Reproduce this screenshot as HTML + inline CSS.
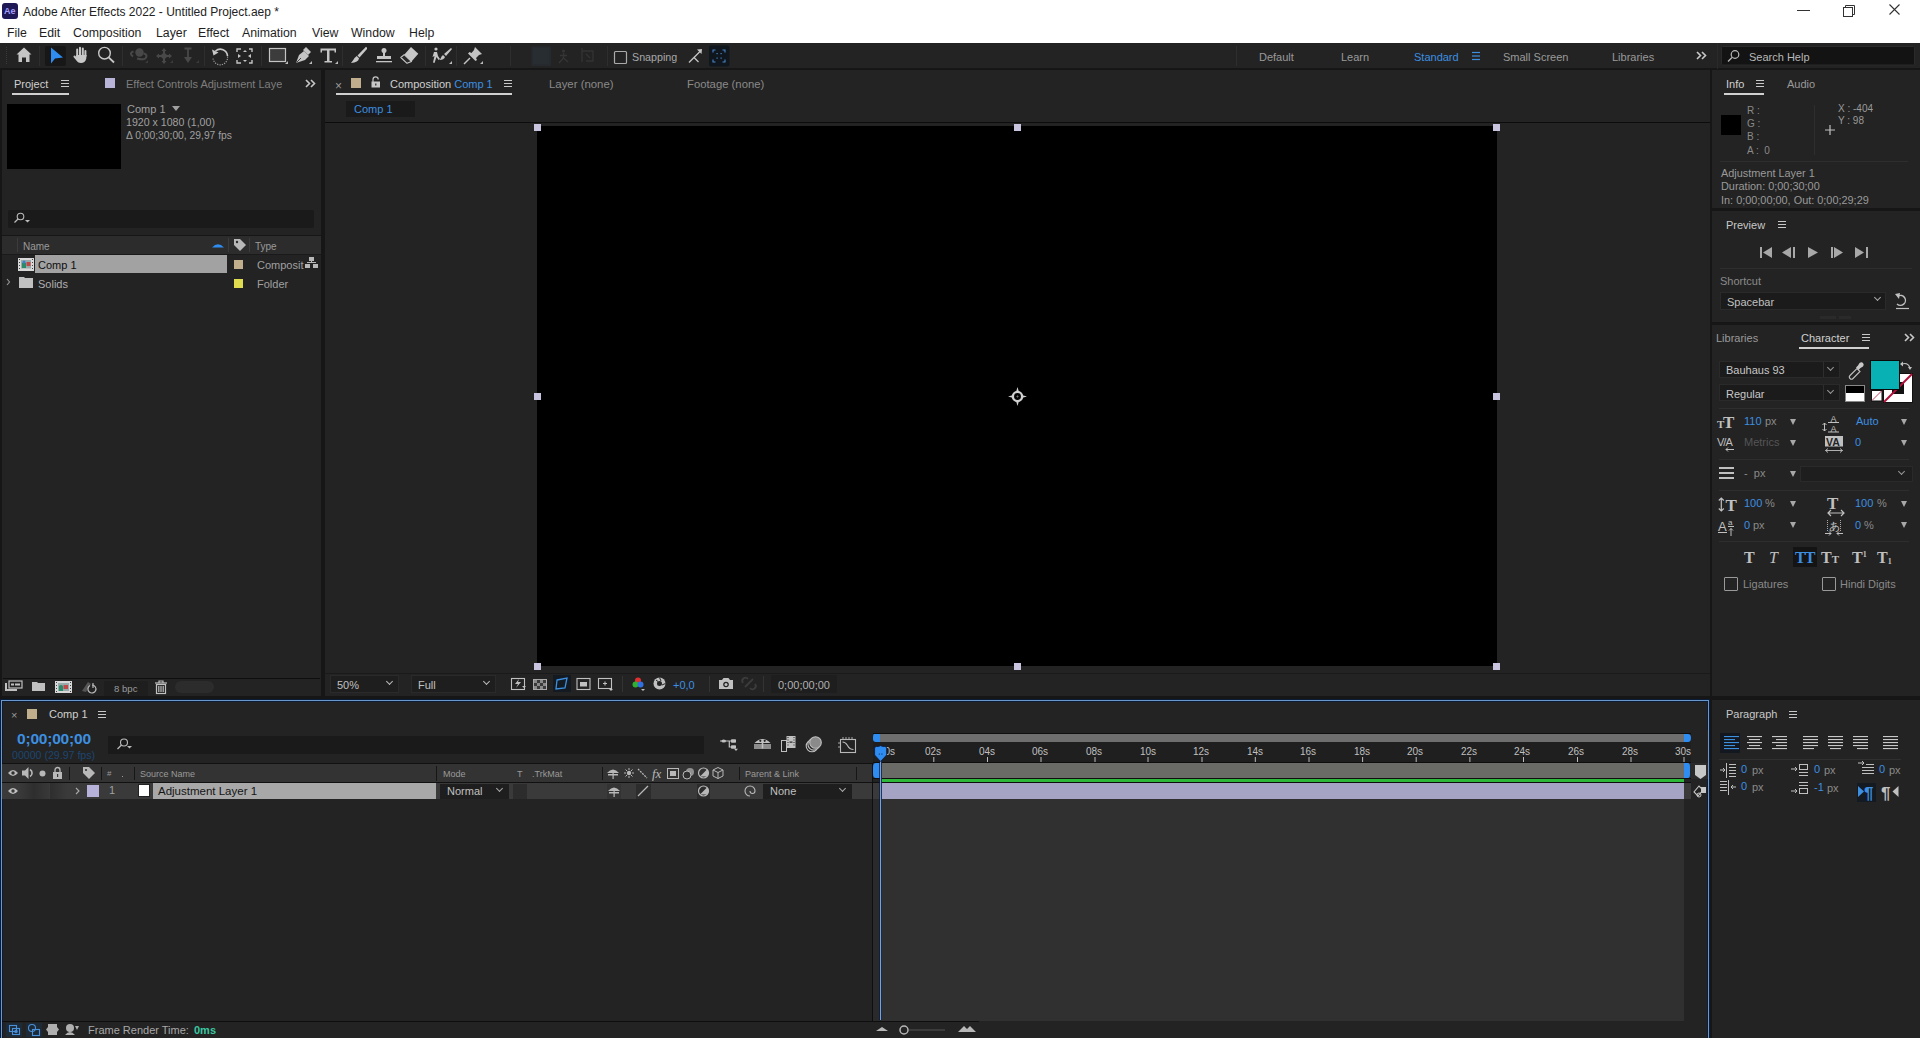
<!DOCTYPE html>
<html><head><meta charset="utf-8">
<style>
*{margin:0;padding:0;box-sizing:border-box}
html,body{width:1920px;height:1038px;overflow:hidden;background:#161616;font-family:"Liberation Sans",sans-serif;font-size:11px;color:#a8a8a8}
.a{position:absolute}
.t{position:absolute;white-space:nowrap;line-height:1;padding-top:1px}
.pn{position:absolute;background:#232323}
.bl{color:#3d8fe0}
.m{font-size:12.3px;color:#1e1e1e;top:26px}
svg{position:absolute;overflow:visible}
.sep{position:absolute;width:1px;background:#2c2c2c}
.hb{position:absolute;width:8px;height:7px;border-top:1px solid #c8c8c8;border-bottom:1px solid #c8c8c8}
.hb:after{content:"";position:absolute;left:0;top:2px;width:8px;height:1px;background:#c8c8c8}
.tab{font-size:11px;color:#9a9a9a}
.act{color:#d0d0d0}
.ul{position:absolute;height:2px;background:#d0d0d0}
.ln{position:absolute;height:1px;background:#303030}
.dd{position:absolute;background:#1b1b1b;border:1px solid #2a2a2a}
.chev{position:absolute;width:6px;height:6px;border-right:1px solid #aaa;border-bottom:1px solid #aaa;transform:rotate(45deg)}
.tri{position:absolute;width:0;height:0;border-left:3px solid transparent;border-right:3px solid transparent;border-top:5px solid #9a9a9a}
</style></head><body>
<!-- ============ TITLE + MENU ============ -->
<div class="a" style="left:0;top:0;width:1920px;height:43px;background:#fff"></div>
<div class="a" style="left:2px;top:3px;width:16px;height:16px;background:#1f1a55;border-radius:3px"></div>
<div class="t" style="left:4px;top:6px;font-size:9px;color:#a6a0ff;font-weight:bold">Ae</div>
<div class="t" style="left:23px;top:5px;font-size:12px;color:#222">Adobe After Effects 2022 - Untitled Project.aep *</div>
<div class="t m" style="left:7px">File</div>
<div class="t m" style="left:39px">Edit</div>
<div class="t m" style="left:73px">Composition</div>
<div class="t m" style="left:156px">Layer</div>
<div class="t m" style="left:198px">Effect</div>
<div class="t m" style="left:242px">Animation</div>
<div class="t m" style="left:312px">View</div>
<div class="t m" style="left:351px">Window</div>
<div class="t m" style="left:409px">Help</div>
<svg style="left:0;top:0" width="1920" height="43">
 <line x1="1797" y1="10.5" x2="1810" y2="10.5" stroke="#333" stroke-width="1"/>
 <rect x="1843.5" y="7.5" width="9" height="9" fill="none" stroke="#333"/>
 <path d="M1845.5 7.5 V5.5 H1854.5 V14.5 H1852.5" fill="none" stroke="#333"/>
 <path d="M1889.5 4.5 L1899.5 14.5 M1899.5 4.5 L1889.5 14.5" stroke="#333" stroke-width="1.1"/>
</svg>
<!-- ============ TOOLBAR ============ -->
<div class="a" style="left:0;top:43px;width:1920px;height:26px;background:#232323"></div>
<div class="a" style="left:0;top:68px;width:1920px;height:2px;background:#161616"></div>
<svg style="left:0;top:43px" width="1920" height="26">
 <!-- grip -->
 <g stroke="#3a3a3a"><line x1="6.5" y1="4" x2="6.5" y2="22" stroke-dasharray="1 1"/></g>
 <!-- home -->
 <path d="M24 4.5 L16.5 11.5 H18.5 V19 H22 V14.5 H26 V19 H29.5 V11.5 H31.5 Z" fill="#c4c4c4"/>
 <line x1="39.5" y1="3" x2="39.5" y2="23" stroke="#2e2e2e"/>
 <!-- selection -->
 <rect x="45" y="3" width="21" height="20" rx="2" fill="#171717"/>
 <path d="M51 4.5 L51 20.5 L55 15.5 L63 14.5 Z" fill="#2f8cf0"/>
 <!-- hand -->
 <g stroke="#c8c8c8" stroke-linecap="round" stroke-width="2" fill="none"><path d="M77.2 13 V6.5 M80 12 V4.8 M82.8 12 V5.5 M85.4 13 V8"/><path d="M74.5 13.5 L77 16.5"/></g>
 <path d="M76.2 12 H86.6 L86.2 16 Q85 20 81 20 Q77.5 20 76 16.5 Z" fill="#c8c8c8"/>
 <!-- zoom -->
 <circle cx="104.5" cy="10.2" r="5.8" fill="none" stroke="#c8c8c8" stroke-width="1.4"/>
 <line x1="108.7" y1="14.4" x2="114" y2="19.5" stroke="#c8c8c8" stroke-width="1.8"/>
 <line x1="122.5" y1="3" x2="122.5" y2="23" stroke="#2e2e2e"/>
 <!-- orbit dim -->
 <g fill="#484848" stroke="#484848">
  <circle cx="139.5" cy="9.5" r="4.2" stroke="none"/>
  <path d="M133 13.5 Q128.5 10 133.5 8.5 M137 15.5 Q146 18 146.5 13 Q146.5 11 143.5 10.5" fill="none" stroke-width="2"/>
  <path d="M145 20 L148 17 V20 Z" stroke="none" fill="#3a3a3a"/>
  <!-- pan -->
  <path d="M164 7 V19 M158 13 H170" stroke-width="2" fill="none"/>
  <circle cx="164" cy="13" r="2.8" stroke="none"/>
  <path d="M161.5 8 L164 5 L166.5 8 Z M161.5 18 L164 21 L166.5 18 Z M159 10.5 L156 13 L159 15.5 Z M169 10.5 L172 13 L169 15.5 Z" stroke="none"/>
  <path d="M170 20 L173 17 V20 Z" stroke="none" fill="#3a3a3a"/>
  <!-- dolly -->
  <path d="M184.5 5.5 H191.5 M188 5.5 V15" stroke-width="1.8" fill="none"/>
  <path d="M184 14 H192 L188 20 Z" stroke="none"/>
  <path d="M196 20 L199 17 V20 Z" stroke="none" fill="#3a3a3a"/>
 </g>
 <line x1="204.5" y1="3" x2="204.5" y2="23" stroke="#2e2e2e"/>
 <!-- rotate -->
 <path d="M215.5 8 A7.2 7.2 0 0 1 227.5 13" fill="none" stroke="#c8c8c8" stroke-width="1.6"/>
 <path d="M227.5 13.5 A7.2 7.2 0 0 1 213 15.5" fill="none" stroke="#9a9a9a" stroke-width="1.2" stroke-dasharray="1.2 1.2"/>
 <path d="M212 6.5 L213.5 12.5 L218.5 9.5 Z" fill="#c8c8c8"/>
 <!-- pan behind -->
 <g fill="none" stroke="#c4c4c4" stroke-width="1.4">
  <path d="M237 9 V6 H241 M249 6 H252 V9 M252 17 V20 H249 M241 20 H237 V17"/>
 </g>
 <path d="M238 11 L241 13 L238 15 Z M251 11 L248 13 L251 15 Z M243 9 L245 7 L247 9 Z M243 17 L245 19 L247 17Z" fill="#c4c4c4"/>
 <line x1="261.5" y1="3" x2="261.5" y2="23" stroke="#2e2e2e"/>
 <!-- rectangle -->
 <rect x="269.5" y="5.5" width="16" height="13" fill="#3c3c3c" stroke="#c4c4c4" stroke-width="1.2"/>
 <path d="M285 21 L288 18 V21 Z" fill="#bbb"/>
 <!-- pen -->
 <path d="M296 20 L299 12 L304 8 L309 13 L305 17 Z" fill="#c4c4c4"/>
 <path d="M303 7 L306 4 L311 9 L308 12 Z" fill="#c4c4c4"/>
 <line x1="296.5" y1="19.5" x2="301" y2="15" stroke="#232323" stroke-width="0.8"/>
 <path d="M309 21 L312 18 V21 Z" fill="#bbb"/>
 <!-- T -->
 <path d="M320.5 5.5 H336 V9.5 H334.5 V7.5 H329.5 V18 H332 V19.5 H324.5 V18 H327 V7.5 H322 V9.5 H320.5 Z" fill="#c4c4c4"/>
 <path d="M335 21 L338 18 V21 Z" fill="#bbb"/>
 <line x1="342.5" y1="3" x2="342.5" y2="23" stroke="#2e2e2e"/>
 <!-- brush -->
 <path d="M366 3.8 Q367.5 4.5 367 6 L359.5 14.5 L357.5 12.5 Z" fill="#c8c8c8"/>
 <path d="M356.8 13 L359 15.2 Q358.5 19.5 351 20 Q353.5 17 354.5 15 Z" fill="#c8c8c8"/>
 <!-- stamp -->
 <circle cx="384" cy="7.5" r="2.5" fill="#c4c4c4"/>
 <path d="M383 9 H385 V13 H391 V16 H377 V13 H383 Z" fill="#c4c4c4"/>
 <rect x="376" y="18" width="16" height="1.3" fill="#c4c4c4"/>
 <!-- eraser -->
 <path d="M411 4 L418.3 10.8 L411.5 18.5 L404.2 11.7 Z" fill="#c8c8c8"/>
 <path d="M404.2 11.7 L411.5 18.5 L407 20.3 L400.8 14.5 Z" fill="#2a2a2a" stroke="#c8c8c8" stroke-width="1.1" stroke-linejoin="round"/>
 <line x1="425.5" y1="3" x2="425.5" y2="23" stroke="#2e2e2e"/>
 <!-- roto brush -->
 <circle cx="436" cy="6" r="1.6" fill="#c4c4c4"/>
 <path d="M434 9 L437 9 L438 13 L440 16 L438.5 17 L436.5 14 L434.5 20 L433 19.5 L434.5 13 L432.5 14 Z" fill="#c4c4c4"/>
 <path d="M451 5 L452 6 L446 13 L444 11 Z M443 12 L445 14 Q444 17 439.5 17 Q441 15 441.5 13.5 Z" fill="#c4c4c4"/>
 <path d="M449 21 L452 18 V21 Z" fill="#bbb"/>
 <line x1="456.5" y1="3" x2="456.5" y2="23" stroke="#2e2e2e"/>
 <!-- puppet pin -->
 <path d="M475 4 L482 11 L479 12 L476 15 L477 17 L475.5 18 L468 10.5 L469.5 9 L471.5 10 L474 7 Z" fill="#c4c4c4"/>
 <line x1="470" y1="15" x2="464" y2="21" stroke="#c4c4c4" stroke-width="1.5"/>
 <path d="M480 21 L483 18 V21 Z" fill="#bbb"/>
 <line x1="510.5" y1="3" x2="510.5" y2="23" stroke="#2e2e2e"/>
 <!-- dim align icons -->
 <rect x="531.5" y="3.5" width="19.5" height="19.5" rx="1" fill="#262a2e"/>
 <rect x="533" y="5" width="16" height="16" fill="#282d32"/>
 <circle cx="563.5" cy="8" r="1.6" fill="#353535"/>
 <path d="M563.5 10 V15 L559 20 M563.5 15 L568 19 M560 12.5 H567" stroke="#353535" stroke-width="1.4" fill="none"/>
 <path d="M582 5 V19 M582 8 H593 V18 H586 M586 11 L590 15" stroke="#333" stroke-width="1.3" fill="none"/>
 <line x1="607.5" y1="3" x2="607.5" y2="23" stroke="#2e2e2e"/>
 <!-- snapping checkbox -->
 <rect x="614.5" y="8.5" width="12" height="12" rx="1" fill="none" stroke="#aaa" stroke-width="1.2"/>
 <!-- snap icon -->
 <path d="M689 19.5 L694 14.5 L698.5 19 M693 15.5 L700.5 8" stroke="#c4c4c4" stroke-width="1.3" fill="none"/>
 <path d="M697 6.5 L702 6 L701.5 11 Z" fill="#c4c4c4"/>
 <rect x="709" y="2.5" width="20.5" height="21" rx="2" fill="#10161d"/>
 <g stroke="#4a86c8" stroke-width="1.1" fill="none">
  <path d="M713 9.5 V7 H715.5 M722.5 7 H725 V9.5 M725 16.5 V19 H722.5 M715.5 19 H713 V16.5"/>
 </g>
 <g fill="#4a86c8"><rect x="716.5" y="10" width="1.2" height="1.2"/><rect x="720.5" y="10" width="1.2" height="1.2"/><rect x="716.5" y="14.5" width="1.2" height="1.2"/><rect x="720.5" y="14.5" width="1.2" height="1.2"/></g>
 <line x1="1236.5" y1="3" x2="1236.5" y2="23" stroke="#2e2e2e"/>
 <!-- hamburger Standard -->
 <g stroke="#3d8fe0" stroke-width="1.2"><line x1="1472" y1="9.5" x2="1480" y2="9.5"/><line x1="1472" y1="13" x2="1480" y2="13"/><line x1="1472" y1="16.5" x2="1480" y2="16.5"/></g>
 <!-- >> -->
 <path d="M1697 9 L1700.5 12.5 L1697 16 M1702 9 L1705.5 12.5 L1702 16" stroke="#c8c8c8" stroke-width="1.6" fill="none"/>
 <line x1="1717.5" y1="0" x2="1717.5" y2="26" stroke="#2a2a2a"/>
 <rect x="1721.5" y="3.5" width="193" height="18.5" rx="1" fill="#131313" stroke="#2a2a2a"/>
 <circle cx="1735" cy="11.5" r="3.8" fill="none" stroke="#bbb" stroke-width="1.2"/>
 <line x1="1732" y1="14.5" x2="1728" y2="18.5" stroke="#bbb" stroke-width="1.3"/>
</svg>
<div class="t" style="left:632px;top:51px;font-size:10.7px;color:#a8a8a8">Snapping</div>
<div class="t" style="left:1259px;top:51px;font-size:11px;color:#9a9a9a">Default</div>
<div class="t" style="left:1341px;top:51px;font-size:11px;color:#9a9a9a">Learn</div>
<div class="t" style="left:1414px;top:51px;font-size:11px;color:#3d8fe0">Standard</div>
<div class="t" style="left:1503px;top:51px;font-size:11px;color:#9a9a9a">Small Screen</div>
<div class="t" style="left:1612px;top:51px;font-size:11px;color:#9a9a9a">Libraries</div>
<div class="t" style="left:1749px;top:51px;font-size:11px;color:#b8b8b8">Search Help</div>
<!-- ============ PROJECT PANEL ============ -->
<div class="pn" style="left:2px;top:70px;width:319px;height:626px"></div>
<div class="t tab act" style="left:14px;top:78px">Project</div>
<div class="hb" style="left:61px;top:80px"></div>
<div class="ul" style="left:12px;top:93px;width:57px"></div>
<div class="a" style="left:105px;top:78px;width:10px;height:10px;background:#b8b4d8"></div>
<div class="t tab" style="left:126px;top:78px;color:#7e7e7e;width:156px;overflow:hidden">Effect Controls Adjustment Layer 1</div>
<svg style="left:0;top:70px" width="322" height="30">
 <path d="M306 10 L309.5 13.5 L306 17 M311 10 L314.5 13.5 L311 17" stroke="#c8c8c8" stroke-width="1.6" fill="none"/>
</svg>
<div class="a" style="left:7px;top:104px;width:114px;height:65px;background:#000"></div>
<div class="t" style="left:127px;top:103px;font-size:11px;color:#a0a0a0">Comp 1</div>
<div class="tri" style="left:172px;top:106px;border-left-width:4px;border-right-width:4px;border-top-width:5px;border-top-color:#a0a0a0"></div>
<div class="t" style="left:126px;top:116px;font-size:10.6px;color:#a0a0a0">1920 x 1080 (1,00)</div>
<div class="t" style="left:126px;top:130px;font-size:10.3px;color:#a0a0a0">Δ 0;00;30;00, 29,97 fps</div>
<div class="a" style="left:8px;top:210px;width:306px;height:18px;background:#1a1a1a;border-radius:2px"></div>
<svg style="left:0;top:200px" width="322" height="100">
 <circle cx="20.5" cy="16.5" r="3.3" fill="none" stroke="#bbb" stroke-width="1.1"/>
 <line x1="18" y1="19" x2="14.5" y2="22.5" stroke="#bbb" stroke-width="1.2"/>
 <path d="M25 20 H30 L27.5 22.5 Z" fill="#bbb"/>
</svg>
<div class="a" style="left:2px;top:235px;width:319px;height:1px;background:#161616"></div>
<div class="a" style="left:2px;top:236px;width:319px;height:18px;background:#2c2c2c"></div>
<div class="a" style="left:2px;top:254px;width:319px;height:1px;background:#1a1a1a"></div>
<div class="a" style="left:17px;top:238px;width:1px;height:14px;background:#3c3c3c"></div>
<div class="a" style="left:228px;top:238px;width:1px;height:14px;background:#3c3c3c"></div>
<div class="a" style="left:249px;top:238px;width:1px;height:14px;background:#3c3c3c"></div>
<div class="t" style="left:23px;top:241px;font-size:10px;color:#9a9a9a">Name</div>
<div class="t" style="left:255px;top:241px;font-size:10px;color:#9a9a9a">Type</div>
<svg style="left:0;top:236px" width="322" height="60">
 <path d="M212 11.5 Q218 5 224 11.5 Z" fill="#2f8cf0"/>
 <path d="M234 3 H240 L246 9 L240 15 L234 9 Z" fill="#b8b8b8"/>
 <circle cx="237" cy="6" r="1.2" fill="#2c2c2c"/>
 <!-- comp icon -->
 <rect x="18" y="22" width="16" height="13" fill="#d8d8d8"/>
 <g fill="#444"><rect x="19" y="23" width="1" height="1"/><rect x="19" y="26" width="1" height="1"/><rect x="19" y="29" width="1" height="1"/><rect x="19" y="32" width="1" height="1"/><rect x="32" y="23" width="1" height="1"/><rect x="32" y="26" width="1" height="1"/><rect x="32" y="29" width="1" height="1"/><rect x="32" y="32" width="1" height="1"/></g>
 <rect x="21" y="24" width="10" height="8.5" fill="#9aa"/>
 <path d="M22 32 V27 Q24 25 26 27 V32 Z" fill="#2a8a6a"/>
 <rect x="26.5" y="26" width="4" height="4" fill="#c04848"/>
 <circle cx="24" cy="26" r="1.5" fill="#3d7fd0"/>
 <!-- network icon -->
 <g fill="#b8b8b8"><rect x="309" y="21" width="5" height="4"/><rect x="305" y="28" width="5" height="4"/><rect x="313" y="28" width="5" height="4"/><rect x="311" y="25" width="1" height="2"/><rect x="307" y="26" width="9" height="1"/></g>
 <!-- solids arrow -->
 <path d="M7 43 L9.5 46 L7 49" stroke="#9a9a9a" stroke-width="1.1" fill="none"/>
 <path d="M19 41 H24 L25 42 H33 V52 H19 Z" fill="#c0c0c0"/>
</svg>
<div class="a" style="left:35px;top:255px;width:192px;height:18px;background:#a2a2a2"></div>
<div class="t" style="left:38px;top:259px;font-size:11px;color:#0e0e0e">Comp 1</div>
<div class="a" style="left:234px;top:260px;width:9px;height:9px;background:#c0ae8c"></div>
<div class="t" style="left:257px;top:259px;font-size:11px;color:#a0a0a0">Composit</div>
<div class="t" style="left:38px;top:278px;font-size:11px;color:#b0b0b0">Solids</div>
<div class="a" style="left:234px;top:279px;width:9px;height:9px;background:#e0dc50"></div>
<div class="t" style="left:257px;top:278px;font-size:11px;color:#a0a0a0">Folder</div>
<!-- project bottom bar -->
<div class="a" style="left:3px;top:678px;width:317px;height:1px;background:#0e0e0e"></div>
<svg style="left:0;top:678px" width="322" height="18">
 <g fill="#c0c0c0">
  <rect x="5" y="5" width="2" height="8"/><rect x="5" y="11" width="12" height="2"/>
  <rect x="9" y="3" width="13" height="7" fill="none" stroke="#c0c0c0" stroke-width="1.2"/>
  <rect x="11" y="5.5" width="3" height="2"/><rect x="15" y="5.5" width="5" height="2"/>
  <path d="M32 4 H37 L38 5 H45 V13 H32 Z"/>
 </g>
 <rect x="55" y="3" width="17" height="12" fill="#d8d8d8"/>
 <g fill="#444"><rect x="56" y="4" width="1" height="1"/><rect x="56" y="7" width="1" height="1"/><rect x="56" y="10" width="1" height="1"/><rect x="56" y="13" width="1" height="1"/><rect x="70" y="4" width="1" height="1"/><rect x="70" y="7" width="1" height="1"/><rect x="70" y="10" width="1" height="1"/><rect x="70" y="13" width="1" height="1"/></g>
 <rect x="58" y="5" width="11" height="8" fill="#9aa"/>
 <path d="M59 13 V8 Q61 6 63 8 V13 Z" fill="#2a8a6a"/><rect x="63.5" y="7" width="4.5" height="4" fill="#c04848"/>
 <path d="M82 13 L88 4 L91 6 L86 14 Z" fill="#555"/>
 <path d="M92 7 A4 4 0 1 1 90 7.5" fill="none" stroke="#bbb" stroke-width="1.2"/>
 <line x1="93" y1="5" x2="93" y2="10" stroke="#bbb" stroke-width="1.2"/>
 <rect x="104" y="3" width="44" height="15" fill="#1e1e1e"/>
 <g fill="none" stroke="#c0c0c0" stroke-width="1.2">
  <rect x="156.5" y="6.5" width="9" height="9"/><line x1="155" y1="5" x2="167" y2="5"/>
  <path d="M159 5 V3 H163 V5"/><line x1="158.8" y1="8" x2="158.8" y2="14"/><line x1="161" y1="8" x2="161" y2="14"/><line x1="163.2" y1="8" x2="163.2" y2="14"/>
 </g>
 <rect x="175" y="3" width="39" height="12" rx="6" fill="#2c2c2c"/>
</svg>
<div class="t" style="left:114px;top:682.5px;font-size:9.6px;color:#9a9a9a">8 bpc</div>
<!-- ============ COMP PANEL ============ -->
<div class="pn" style="left:325px;top:70px;width:1385px;height:626px"></div>
<div class="t" style="left:335px;top:79px;font-size:12px;color:#9a9a9a">×</div>
<div class="a" style="left:351px;top:78px;width:10px;height:10px;background:#c0ae8c"></div>
<svg style="left:325px;top:70px" width="1383" height="60">
 <path d="M48 12 V9.5 A2.6 2.6 0 0 1 53.2 9.5" fill="none" stroke="#c8c8c8" stroke-width="1.2"/>
 <rect x="46.5" y="11.5" width="8.5" height="6" fill="#c8c8c8"/><rect x="50.2" y="13.5" width="1.2" height="2" fill="#232323"/>
</svg>
<div class="t tab act" style="left:390px;top:78px">Composition <span class="bl">Comp 1</span></div>
<div class="hb" style="left:504px;top:80px"></div>
<div class="ul" style="left:336px;top:93px;width:176px"></div>
<div class="t tab" style="left:549px;top:78px;color:#8a8a8a;font-size:11.4px">Layer (none)</div>
<div class="t tab" style="left:687px;top:78px;color:#8a8a8a;font-size:11.3px">Footage (none)</div>
<div class="a" style="left:346px;top:101px;width:69px;height:16px;background:#1a1a1a"></div>
<div class="t" style="left:354px;top:103px;font-size:11px;color:#3d8fe0">Comp 1</div>
<div class="a" style="left:325px;top:122px;width:1385px;height:1px;background:#0c0c0c"></div>
<div class="a" style="left:537px;top:126px;width:960px;height:540px;background:#000"></div>
<svg style="left:0;top:0" width="1920" height="700">
 <g fill="#c8c4e0">
  <rect x="534" y="124" width="7" height="7"/><rect x="1014" y="124" width="7" height="7"/><rect x="1493" y="124" width="7" height="7"/>
  <rect x="534" y="393" width="7" height="7"/><rect x="1493" y="393" width="7" height="7"/>
  <rect x="534" y="663" width="7" height="7"/><rect x="1014" y="663" width="7" height="7"/><rect x="1493" y="663" width="7" height="7"/>
 </g>
 <g transform="translate(1017.5 396.5)" fill="#d0d0d0">
  <circle r="4.6" fill="none" stroke="#d0d0d0" stroke-width="2.3"/>
  <path d="M-1.6 -4 L0 -9.5 L1.6 -4 Z M-1.6 4 L0 9.5 L1.6 4 Z M-4 -1.6 L-9.5 0 L-4 1.6 Z M4 -1.6 L9.5 0 L4 1.6 Z"/>
  <path d="M0 -1.2 V1.2 M-1.2 0 H1.2" stroke="#888" stroke-width="0.6"/>
 </g>
</svg>
<!-- comp bottom bar -->
<div class="a" style="left:325px;top:673px;width:1385px;height:1px;background:#1a1a1a"></div>

<div class="dd" style="left:330px;top:675px;width:69px;height:18px;background:#1e1e1e"></div>
<div class="t" style="left:337px;top:679px;font-size:11px;color:#c0c0c0">50%</div>
<div class="chev" style="left:387px;top:679px;width:5px;height:5px;border-color:#bbb"></div>
<div class="dd" style="left:411px;top:675px;width:85px;height:18px;background:#1e1e1e"></div>
<div class="t" style="left:418px;top:679px;font-size:11px;color:#c0c0c0">Full</div>
<div class="chev" style="left:484px;top:679px;width:5px;height:5px;border-color:#bbb"></div>
<svg style="left:0;top:672px" width="1000" height="26">
 <g fill="none" stroke="#c0c0c0" stroke-width="1.1">
  <rect x="511.5" y="6.5" width="13" height="11"/>
  <rect x="577" y="6.5" width="13" height="11"/>
  <rect x="598.5" y="6.5" width="13" height="10"/><path d="M605 9.5 V13.5 M603 11.5 H607"/>
 </g>
 <path d="M519 7 L515 12 H518 L516 16 L521 10 H518 Z" fill="#c0c0c0"/>
 <path d="M522 14 H526 L524 16 Z M609 17 H613 L611 19 Z" fill="#c0c0c0"/>
 <rect x="533.5" y="7.5" width="13" height="10" fill="#3a3a3a" stroke="#aaa"/>
 <g fill="#8a8a8a"><rect x="534" y="8" width="3" height="3"/><rect x="540" y="8" width="3" height="3"/><rect x="537" y="11" width="3" height="3"/><rect x="543" y="11" width="3" height="3"/><rect x="534" y="14" width="3" height="3"/><rect x="540" y="14" width="3" height="3"/></g>
 <rect x="553" y="3" width="18" height="17" fill="#131a22"/>
 <path d="M557 8 L567 6 L565 16 L556 17 Z" fill="none" stroke="#3d8fe0" stroke-width="1.3"/>
 <rect x="580" y="10" width="7" height="4.5" fill="#c0c0c0"/>
 <line x1="622.5" y1="4" x2="622.5" y2="20" stroke="#333"/>
 <circle cx="638" cy="8.5" r="3" fill="#e03030"/><circle cx="635.5" cy="12.5" r="3" fill="#30b030"/><circle cx="640.5" cy="12.5" r="3" fill="#3070e0"/>
 <path d="M641 17 H645 L643 19 Z" fill="#c0c0c0"/>
 <circle cx="659.5" cy="11.5" r="6" fill="#c0c0c0"/>
 <circle cx="659.5" cy="11.5" r="2.5" fill="#232323"/>
 <path d="M659.5 5.5 L661 9 M665.5 11.5 L662 13 M656 8 L658 9.5" stroke="#232323" stroke-width="1"/>
 <line x1="709.5" y1="4" x2="709.5" y2="20" stroke="#333"/>
 <path d="M719 8 H722 L723.5 6 H728.5 L730 8 H733 V17 H719 Z" fill="#c0c0c0"/>
 <circle cx="726" cy="12.5" r="2.8" fill="#232323"/><circle cx="726" cy="12.5" r="1.5" fill="#c0c0c0"/>
 <path d="M745 15 L753 7 M743 11 A3 3 0 0 1 748 7 M750 16 A3 3 0 0 0 755 12" stroke="#3c3c3c" stroke-width="1.8" fill="none"/>
 <line x1="763.5" y1="4" x2="763.5" y2="20" stroke="#333"/>
 <rect x="771" y="3" width="66" height="18" fill="#1e1e1e"/>
</svg>
<div class="t" style="left:673px;top:679px;font-size:11px;color:#3d8fe0">+0,0</div>
<div class="t" style="left:778px;top:679px;font-size:11px;color:#b0b0b0">0;00;00;00</div>
<!-- ============ RIGHT PANELS ============ -->
<div class="pn" style="left:1712px;top:70px;width:208px;height:138px"></div>
<div class="t tab act" style="left:1726px;top:78px">Info</div>
<div class="hb" style="left:1756px;top:80px"></div>
<div class="ul" style="left:1724px;top:93px;width:40px"></div>
<div class="t tab" style="left:1787px;top:78px">Audio</div>
<div class="a" style="left:1721px;top:115px;width:20px;height:20px;background:#000"></div>
<div class="t" style="left:1747px;top:102.5px;font-size:10px;color:#8a8a8a;line-height:13.4px;white-space:pre">R :
G :
B :
A :  0</div>
<div class="a" style="left:1814px;top:105px;width:1px;height:50px;background:#2e2e2e"></div>
<svg style="left:1700px;top:100px" width="220" height="60">
 <path d="M130 25 V35 M125 30 H135" stroke="#c0c0c0" stroke-width="1.2"/>
</svg>
<div class="t" style="left:1838px;top:101.5px;font-size:10px;color:#9a9a9a;line-height:12.8px;white-space:pre">X : -404
Y : 98</div>
<div class="a" style="left:1720px;top:161px;width:188px;height:1px;background:#2e2e2e"></div>
<div class="t" style="left:1721px;top:165.5px;font-size:10.9px;color:#9a9a9a;line-height:13.8px;white-space:pre">Adjustment Layer 1
Duration: 0;00;30;00
In: 0;00;00;00, Out: 0;00;29;29</div>
<!-- preview -->
<div class="pn" style="left:1712px;top:211px;width:208px;height:111px"></div>
<div class="t tab act" style="left:1726px;top:219px;color:#c8c8c8">Preview</div>
<div class="hb" style="left:1778px;top:221px"></div>
<svg style="left:1712px;top:240px" width="208" height="30">
 <g fill="#a8a8a8">
  <rect x="48" y="7" width="2" height="11"/><path d="M60 7 V18 L51 12.5 Z"/>
  <path d="M79 7 V18 L70 12.5 Z"/><rect x="81" y="7" width="2" height="11"/>
  <path d="M96 7 V18 L106 12.5 Z"/>
  <rect x="119" y="7" width="2" height="11"/><path d="M122 7 V18 L131 12.5 Z"/>
  <path d="M143 7 V18 L152 12.5 Z"/><rect x="154" y="7" width="2" height="11"/>
 </g>
</svg>
<div class="a" style="left:1720px;top:268px;width:192px;height:1px;background:#2e2e2e"></div>
<div class="t" style="left:1720px;top:275px;font-size:11px;color:#8a8a8a">Shortcut</div>
<div class="dd" style="left:1720px;top:292px;width:166px;height:18px"></div>
<div class="t" style="left:1727px;top:296px;font-size:11px;color:#c0c0c0">Spacebar</div>
<div class="chev" style="left:1875px;top:295px;width:5px;height:5px;border-color:#aaa"></div>
<svg style="left:1890px;top:290px" width="30" height="25">
 <path d="M8 6 A5 5 0 1 1 7 14" fill="none" stroke="#c0c0c0" stroke-width="1.4"/>
 <path d="M5 4 L9 9 L10 3 Z" fill="#c0c0c0"/>
 <line x1="6" y1="18.5" x2="19" y2="18.5" stroke="#c0c0c0" stroke-width="1.2"/>
</svg>
<svg style="left:1712px;top:314px" width="208" height="8">
 <rect x="108" y="2" width="16" height="3" fill="#2a2a2a"/><rect x="127" y="2" width="12" height="3" fill="#2a2a2a"/>
</svg>
<!-- character -->
<div class="pn" style="left:1712px;top:325px;width:208px;height:371px"></div>
<div class="t tab" style="left:1716px;top:332px;color:#9a9a9a">Libraries</div>
<div class="t tab act" style="left:1801px;top:332px">Character</div>
<div class="hb" style="left:1862px;top:334px"></div>
<div class="ul" style="left:1799px;top:347px;width:70px"></div>
<svg style="left:1712px;top:325px" width="208" height="30">
 <path d="M193 9 L196.5 12.5 L193 16 M198 9 L201.5 12.5 L198 16" stroke="#c8c8c8" stroke-width="1.6" fill="none"/>
</svg>
<div class="dd" style="left:1719px;top:361px;width:121px;height:17px"></div>
<div class="a" style="left:1823px;top:362px;width:1px;height:15px;background:#2e2e2e"></div>
<div class="t" style="left:1726px;top:364px;font-size:11px;color:#c8c8c8">Bauhaus 93</div>
<div class="chev" style="left:1828px;top:365px;width:5px;height:5px;border-color:#999"></div>
<div class="dd" style="left:1719px;top:384px;width:121px;height:17px"></div>
<div class="a" style="left:1823px;top:385px;width:1px;height:15px;background:#2e2e2e"></div>
<div class="t" style="left:1726px;top:388px;font-size:11px;color:#c8c8c8">Regular</div>
<div class="chev" style="left:1828px;top:388px;width:5px;height:5px;border-color:#999"></div>
<svg style="left:1712px;top:355px" width="208" height="60">
 <!-- eyedropper -->
 <path d="M138 23.5 Q136.5 22 138 20.5 L145 13.5 L148 16.5 L141 23.5 Q139.5 25 138 23.5 Z" fill="none" stroke="#c0c0c0" stroke-width="1.1"/>
 <path d="M144 12.5 L146 10.5 L147.5 8 Q149.5 6.5 151 8 Q152.5 9.5 151 11.5 L148.5 13 L146.5 15 Z" fill="#c8c8c8"/>
 <!-- b/w swatch -->
 <rect x="133.5" y="30.5" width="19" height="16" fill="#fff" stroke="#888"/>
 <rect x="134" y="31" width="18" height="7" fill="#000"/>
 <!-- stroke swatch -->
 <rect x="171.5" y="18.5" width="29" height="29" fill="#fff" stroke="#111"/>
 <rect x="180" y="27" width="12" height="12" fill="#111"/>
 <line x1="172" y1="47" x2="200" y2="19" stroke="#b0103a" stroke-width="2"/>
 <!-- fill swatch -->
 <rect x="158.5" y="5.5" width="29" height="29" fill="#08b2b4" stroke="#0a0a0a"/>
 <!-- no color -->
 <rect x="159.5" y="35.5" width="10.5" height="10.5" fill="#fff" stroke="#111"/>
 <line x1="160" y1="45.5" x2="169.5" y2="36" stroke="#b0103a" stroke-width="0.8"/>
 <!-- swap -->
 <path d="M190 9 Q196 7 198 13" fill="none" stroke="#c0c0c0" stroke-width="1.2"/>
 <path d="M188 9 L191 6.5 L191 11.5 Z M196 12 L200 12 L198 15 Z" fill="#c0c0c0"/>
</svg>
<div class="a" style="left:1719px;top:408px;width:190px;height:1px;background:#2e2e2e"></div>
<div class="a" style="left:1719px;top:459px;width:190px;height:1px;background:#2e2e2e"></div>
<div class="a" style="left:1719px;top:490px;width:190px;height:1px;background:#2e2e2e"></div>
<div class="a" style="left:1719px;top:541px;width:190px;height:1px;background:#2e2e2e"></div>
<!-- value texts -->
<div class="t bl" style="left:1744px;top:415px;font-size:11px">110</div><div class="t" style="left:1765px;top:415px;font-size:11px;color:#8a8a8a">px</div>
<div class="t" style="left:1744px;top:436px;font-size:11px;color:#555">Metrics</div>
<div class="t bl" style="left:1856px;top:415px;font-size:11px">Auto</div>
<div class="t bl" style="left:1855px;top:436px;font-size:11px">0</div>
<div class="t" style="left:1744px;top:467px;font-size:11px;color:#8a8a8a">-&nbsp; px</div>
<div class="dd" style="left:1800px;top:466px;width:113px;height:16px;background:#1e1e1e"></div>
<div class="chev" style="left:1899px;top:469px;width:5px;height:5px;border-color:#999"></div>
<div class="t bl" style="left:1744px;top:497px;font-size:11px">100</div><div class="t" style="left:1765px;top:497px;font-size:11px;color:#8a8a8a">%</div>
<div class="t bl" style="left:1855px;top:497px;font-size:11px">100</div><div class="t" style="left:1877px;top:497px;font-size:11px;color:#8a8a8a">%</div>
<div class="t bl" style="left:1744px;top:519px;font-size:11px">0</div><div class="t" style="left:1753px;top:519px;font-size:11px;color:#8a8a8a">px</div>
<div class="t bl" style="left:1855px;top:519px;font-size:11px">0</div><div class="t" style="left:1864px;top:519px;font-size:11px;color:#8a8a8a">%</div>
<svg style="left:1712px;top:400px" width="208" height="200">
 <g fill="#a8a8a8">
  <path d="M78 19 L81 25 L84 19 Z M78 40 L81 46 L84 40 Z M78 71 L81 77 L84 71 Z M78 101 L81 107 L84 101 Z M78 122 L81 128 L84 122 Z"/>
  <path d="M189 19 L192 25 L195 19 Z M189 40 L192 46 L195 40 Z M189 101 L192 107 L195 101 Z M189 122 L192 128 L195 122 Z"/>
 </g>
 <g fill="#c0c0c0" font-family="Liberation Serif" font-weight="bold">
  <text x="5" y="28" font-size="11">T</text><text x="11" y="28" font-size="17">T</text>
  <text x="5" y="46" font-size="11" font-family="Liberation Sans" font-weight="normal" letter-spacing="-1">V/A</text>
  <text x="13.5" y="111" font-size="17">T</text>
  <text x="115" y="109" font-size="17">T</text>
  <text x="6" y="131" font-size="13" font-family="Liberation Sans" font-weight="normal">A</text><text x="16" y="125" font-size="8" font-family="Liberation Sans" font-weight="normal">a</text>
 </g>
 <path d="M9.3 111 V98 M6.8 100.5 L9.3 98 L11.8 100.5 M6.8 108.5 L9.3 111 L11.8 108.5" stroke="#c0c0c0" stroke-width="1.2" fill="none"/>
 <path d="M116 113 H132 M119 110 L116 113 L119 116 M129 110 L132 113 L129 116" stroke="#c0c0c0" stroke-width="1.2" fill="none"/>
 <!-- leading -->
 <g fill="#c0c0c0" font-family="Liberation Sans" font-size="9"><text x="118.5" y="22">A</text><text x="118.5" y="31.5">A</text></g>
 <path d="M112.5 23 V31 M110.5 25 L112.5 23 L114.5 25 M110.5 29 L112.5 31 L114.5 29 M116 22.5 H127 M116 32 H127" stroke="#c0c0c0" stroke-width="1" fill="none"/>
 <!-- tracking -->
 <rect x="113" y="36" width="18" height="10.5" fill="#c0c0c0"/>
 <text x="114" y="45.5" font-size="10.5" font-family="Liberation Sans" font-weight="bold" fill="#232323">VA</text>
 <path d="M113.5 50.5 H130.5 M116 48.5 L113.5 50.5 L116 52.5 M128 48.5 L130.5 50.5 L128 52.5" stroke="#c0c0c0" stroke-width="0.9" fill="none"/>
 <path d="M14 49.5 H22 M16 47.5 L14 49.5 L16 51.5" stroke="#c0c0c0" stroke-width="1" fill="none"/>
 <!-- lines icon -->
 <g fill="#c0c0c0"><rect x="7" y="67" width="15" height="2"/><rect x="7" y="72" width="15" height="2"/><rect x="7" y="77" width="15" height="2"/></g>
 <!-- baseline -->
 <path d="M6 132.5 H15 M16 126.5 H22 M19 136 V128.5 M17 130.5 L19 128.5 L21 130.5" stroke="#c0c0c0" stroke-width="1" fill="none"/>
 <!-- tsume -->
 <text x="116.5" y="130" font-size="11" fill="#c8c8c8">あ</text>
 <path d="M115.5 120 V131 M128.5 120 V131" stroke="#aaa" stroke-dasharray="1 1"/>
 <path d="M113 133.5 H119 M117 131.5 L119 133.5 L117 135.5 M131 133.5 H125 M127 131.5 L125 133.5 L127 135.5" stroke="#c0c0c0" stroke-width="1" fill="none"/>
</svg>
<!-- style buttons -->
<div class="a" style="left:1793px;top:547px;width:24px;height:20px;background:#141414"></div>
<div class="t" style="left:1744px;top:549px;font-size:16px;font-family:'Liberation Serif';font-weight:bold;color:#c0c0c0">T</div>
<div class="t" style="left:1769px;top:549px;font-size:16px;font-family:'Liberation Serif';font-style:italic;color:#c0c0c0">T</div>
<div class="t" style="left:1795px;top:549px;font-size:16px;font-family:'Liberation Serif';font-weight:bold;color:#3d8fe0;letter-spacing:-1px">TT</div>
<div class="t" style="left:1821px;top:549px;font-size:16px;font-family:'Liberation Serif';font-weight:bold;color:#c0c0c0">T<span style="font-size:11px">T</span></div>
<div class="t" style="left:1852px;top:549px;font-size:16px;font-family:'Liberation Serif';font-weight:bold;color:#c0c0c0">T<sup style="font-size:8px;vertical-align:6px">1</sup></div>
<div class="t" style="left:1877px;top:549px;font-size:16px;font-family:'Liberation Serif';font-weight:bold;color:#c0c0c0">T<sub style="font-size:8px;vertical-align:-1px">1</sub></div>
<div class="a" style="left:1724px;top:577px;width:14px;height:14px;border:1.2px solid #999;border-radius:1px"></div>
<div class="t" style="left:1743px;top:578px;font-size:11px;color:#8a8a8a">Ligatures</div>
<div class="a" style="left:1822px;top:577px;width:14px;height:14px;border:1.2px solid #999;border-radius:1px"></div>
<div class="t" style="left:1840px;top:578px;font-size:11px;color:#8a8a8a">Hindi Digits</div>
<!-- ============ TIMELINE ============ -->
<div class="a" style="left:0;top:699px;width:1710px;height:339px;background:#0b1c36"></div>
<div class="a" style="left:1px;top:700px;width:1708px;height:338px;border:1px solid #6a98cc;border-bottom:none"></div>
<div class="a" style="left:3px;top:702px;width:1704px;height:336px;background:#232323"></div>
<div class="t" style="left:11px;top:709px;font-size:11px;color:#9a9a9a">×</div>
<div class="a" style="left:27px;top:709px;width:10px;height:10px;background:#c0ae8c"></div>
<div class="t tab act" style="left:49px;top:708px">Comp 1</div>
<div class="hb" style="left:98px;top:711px"></div>
<div class="t" style="left:17px;top:730px;font-size:15.5px;color:#3d8fe0;font-weight:bold;letter-spacing:-0.2px">0;00;00;00</div>
<div class="t" style="left:12px;top:748.5px;font-size:10.6px;color:#1d4670">00000 (29.97 fps)</div>
<div class="a" style="left:108px;top:736px;width:596px;height:18px;background:#1a1a1a"></div>
<svg style="left:0;top:730px" width="880" height="30">
 <circle cx="124" cy="12.5" r="3.5" fill="none" stroke="#bbb" stroke-width="1.1"/>
 <line x1="121.5" y1="15" x2="117.5" y2="19" stroke="#bbb" stroke-width="1.2"/>
 <path d="M127 16 H132 L129.5 18.5 Z" fill="#bbb"/>
 <!-- icons right -->
 <g fill="#c0c0c0" stroke="none">
  <path d="M720 11 H731 M729.3 11 V17 H731" stroke="#c0c0c0" stroke-width="1.2" fill="none"/>
  <ellipse cx="723.7" cy="11" rx="2.3" ry="1.6"/>
  <rect x="731" y="9.3" width="5" height="3.4" rx="0.8"/>
  <rect x="731" y="15.3" width="5" height="3.4" rx="0.8"/>
  <path d="M734 18.8 H738 L736 21 Z"/>
  <path d="M754.5 13 Q762.5 5 770.5 13 Z"/>
  <circle cx="760.3" cy="10.8" r="1.1" fill="#232323"/><circle cx="764.7" cy="10.8" r="1.1" fill="#232323"/>
  <rect x="754" y="14" width="17" height="5" fill="#8c8c8c"/>
  <rect x="761.7" y="11" width="1.6" height="7.5"/>
  <rect x="781.5" y="10.5" width="5" height="11" fill="none" stroke="#c0c0c0" stroke-width="1"/>
  <rect x="786.5" y="6" width="9" height="12" fill="#c0c0c0"/>
  <g fill="#232323"><rect x="787.5" y="7" width="1" height="1"/><rect x="787.5" y="9.5" width="1" height="1"/><rect x="787.5" y="12" width="1" height="1"/><rect x="787.5" y="14.5" width="1" height="1"/><rect x="793.5" y="7" width="1" height="1"/><rect x="793.5" y="9.5" width="1" height="1"/><rect x="793.5" y="12" width="1" height="1"/><rect x="793.5" y="14.5" width="1" height="1"/><rect x="789.5" y="11.5" width="3" height="1.2"/></g>
  <circle cx="812" cy="16" r="5.8" fill="#232323" stroke="#c0c0c0" stroke-width="1.1"/>
  <circle cx="813.7" cy="14.3" r="5.8" fill="#232323" stroke="#c0c0c0" stroke-width="1.1"/>
  <circle cx="815.5" cy="12.5" r="5.8" fill="#8a8a8a" stroke="#c0c0c0" stroke-width="1.1"/>
 </g>
 <rect x="840.5" y="9.5" width="15" height="13" fill="none" stroke="#b8b8b8" stroke-width="1.1"/>
 <path d="M843 7 V9 M846 7 V9 M849 7 V9 M852 7 V9 M838 13 H840 M838 17 H840" stroke="#b8b8b8" stroke-width="0.9"/>
 <path d="M842.5 12 Q845.5 12 847.5 15.5 Q849.5 19.5 853.5 19.5" fill="none" stroke="#b8b8b8" stroke-width="1.1"/>
</svg>
<!-- header row -->
<div class="a" style="left:2px;top:763px;width:870px;height:1px;background:#111"></div>
<div class="a" style="left:2px;top:764px;width:870px;height:18px;background:#333"></div>
<div class="a" style="left:2px;top:782px;width:870px;height:1px;background:#111"></div>
<svg style="left:0;top:764px" width="880" height="18">
 <g fill="#b8b8b8">
  <path d="M8 9 Q13 3 18 9 Q13 15 8 9 Z"/><circle cx="13" cy="9" r="1.7" fill="#2f2f2f"/>
  <path d="M22 6.5 H25 L28.5 3 V15 L25 11.5 H22 Z"/><path d="M30 5.5 A4 4 0 0 1 30 12.5" stroke="#b8b8b8" stroke-width="1.6" fill="none"/>
  <circle cx="42.5" cy="9.5" r="3"/>
  <rect x="53" y="8" width="9" height="7"/><path d="M55 8 V6 A2.5 2.5 0 0 1 60 6 V8" fill="none" stroke="#b8b8b8" stroke-width="1.3"/>
  <path d="M83 3 H89 L95 9 L89 15 L83 9 Z"/>
 </g>
 <circle cx="86" cy="6" r="1.1" fill="#333"/><rect x="122" y="12" width="1" height="1" fill="#999"/><rect x="53" y="8" width="9" height="7" fill="#b8b8b8"/><rect x="57" y="10" width="1.2" height="3" fill="#333"/>
 <g stroke="#161616"><line x1="69.5" y1="3" x2="69.5" y2="16"/><line x1="101.5" y1="3" x2="101.5" y2="16"/><line x1="134.5" y1="3" x2="134.5" y2="16"/><line x1="436.5" y1="2" x2="436.5" y2="17"/><line x1="602.5" y1="3" x2="602.5" y2="16"/><line x1="739.5" y1="3" x2="739.5" y2="16"/><line x1="856.5" y1="3" x2="856.5" y2="16"/></g>
 <!-- switches header icons -->
 <g fill="#b8b8b8" stroke="#b8b8b8">
  <path d="M607 9 Q613 2 619 9 Z" stroke="none"/><rect x="612.5" y="6" width="1.2" height="9" stroke="none"/><rect x="608" y="10" width="10" height="1.5" stroke="none"/>
  <circle cx="629" cy="9" r="2.2" stroke="none"/>
  <path d="M629 4 V6 M629 12 V14 M624 9 H626 M632 9 H634 M625.5 5.5 L627 7 M631 11 L632.5 12.5 M625.5 12.5 L627 11 M631 7 L632.5 5.5" fill="none" stroke-width="1"/>
  <path d="M638 5 L647 14" fill="none" stroke-width="1.3" stroke-dasharray="2 1"/>
  <rect x="667.5" y="4.5" width="11" height="10" fill="none" stroke-width="1"/><rect x="670" y="7" width="6" height="5" stroke="none"/>
  <circle cx="690" cy="8" r="4" stroke="none" opacity="0.7"/><circle cx="687" cy="11" r="4" fill="#2f2f2f" stroke-width="1"/>
  <circle cx="703.5" cy="9" r="5" fill="none" stroke-width="1.2"/><path d="M700 12.5 L707 5.5 A5 5 0 0 1 707 12.5 Z" stroke="none"/>
  <path d="M718 3.5 L723 6 V12 L718 14.5 L713 12 V6 Z M713 6 L718 8.5 L723 6 M718 8.5 V14.5" fill="none" stroke-width="1"/>
 </g>
 <text x="652" y="14" font-family="Liberation Serif" font-style="italic" font-size="13" fill="#b8b8b8">fx</text>
</svg>
<div class="t" style="left:107px;top:769px;font-size:8px;color:#9a9a9a">#</div>
<div class="t" style="left:140px;top:769px;font-size:9px;color:#9a9a9a">Source Name</div>
<div class="t" style="left:443px;top:769px;font-size:9px;color:#9a9a9a">Mode</div>
<div class="t" style="left:517px;top:769px;font-size:9px;color:#9a9a9a">T</div>
<div class="t" style="left:532px;top:769px;font-size:9px;color:#9a9a9a">.TrkMat</div>
<div class="t" style="left:745px;top:769px;font-size:9px;color:#9a9a9a">Parent &amp; Link</div>
<!-- layer row -->
<div class="a" style="left:2px;top:783px;width:870px;height:16px;background:#3a3a3a"></div>
<div class="a" style="left:19px;top:783px;width:30px;height:16px;background:linear-gradient(90deg,#3a3a3a,#2e2e2e 50%,#383838)"></div><div class="a" style="left:50px;top:783px;width:17px;height:16px;background:linear-gradient(90deg,#2e2e2e,#3a3a3a)"></div>
<div class="a" style="left:153px;top:783px;width:283px;height:16px;background:#a8a8a8"></div>
<div class="a" style="left:138px;top:784px;width:12px;height:13px;background:#fff;border:1px solid #222"></div>
<div class="a" style="left:87px;top:785px;width:12px;height:12px;background:#b6b2da"></div>
<div class="t" style="left:109px;top:784px;font-size:11px;color:#a0a0a0">1</div>
<div class="t" style="left:158px;top:785px;font-size:11.5px;color:#151515">Adjustment Layer 1</div>
<div class="a" style="left:440px;top:784px;width:69px;height:15px;background:#1e1e1e"></div>
<div class="t" style="left:447px;top:785px;font-size:11px;color:#c0c0c0">Normal</div>
<div class="chev" style="left:497px;top:786px;width:5px;height:5px;border-color:#aaa"></div>
<div class="a" style="left:513px;top:784px;width:14px;height:15px;background:#2c2c2c"></div>
<div class="a" style="left:607px;top:784px;width:14px;height:15px;background:#333"></div>
<div class="a" style="left:636px;top:784px;width:15px;height:15px;background:#2c2c2c"></div>
<div class="a" style="left:697px;top:784px;width:13px;height:15px;background:#2c2c2c"></div>
<div class="a" style="left:763px;top:784px;width:89px;height:15px;background:#1e1e1e"></div>
<div class="t" style="left:770px;top:785px;font-size:11px;color:#c0c0c0">None</div>
<div class="chev" style="left:840px;top:786px;width:5px;height:5px;border-color:#aaa"></div>
<svg style="left:0;top:783px" width="880" height="17">
 <path d="M8 8 Q13 2 18 8 Q13 14 8 8 Z" fill="#c0c0c0"/><circle cx="13" cy="8" r="1.7" fill="#3a3a3a"/>
 <path d="M76 5 L79 8 L76 11" stroke="#aaa" stroke-width="1.1" fill="none"/>
 <g fill="#b8b8b8" stroke="#b8b8b8">
  <path d="M608 8 Q614 1 620 8 Z" stroke="none"/><rect x="613.5" y="5" width="1.2" height="9" stroke="none"/><rect x="609" y="9" width="10" height="1.5" stroke="none"/>
  <line x1="638" y1="13" x2="648" y2="3" stroke-width="1.2"/>
  <circle cx="703.5" cy="8" r="5" fill="none" stroke-width="1.2"/><path d="M700 11.5 L707 4.5 A5 5 0 0 1 707 11.5 Z" stroke="none"/>
  <path d="M750 13 A5 5 0 1 1 755 8 A2.5 2.5 0 1 1 750 8" fill="none" stroke-width="1.1"/>
 </g>
</svg>
<!-- vertical divider -->
<div class="a" style="left:872px;top:763px;width:1px;height:258px;background:#0e0e0e"></div>
<!-- right timeline area -->
<div class="a" style="left:873px;top:730px;width:835px;height:33px;background:#232323"></div>
<div class="a" style="left:873px;top:733px;width:818px;height:1px;background:#0e0e0e"></div>
<div class="a" style="left:880px;top:734px;width:804px;height:8px;background:#6e6e6e"></div>
<div class="a" style="left:873px;top:742px;width:818px;height:20px;background:#1f1f1f"></div>
<div class="a" style="left:873px;top:762px;width:818px;height:1px;background:#0e0e0e"></div>
<div class="a" style="left:873px;top:763px;width:835px;height:16px;background:#2a2a2a"></div>
<div class="a" style="left:880px;top:763px;width:804px;height:15px;background:#6a6a66"></div>
<div class="a" style="left:873px;top:778px;width:818px;height:1px;background:#0e0e0e"></div>
<div class="a" style="left:880px;top:779px;width:804px;height:3px;background:#2eb83a"></div>
<div class="a" style="left:873px;top:782px;width:818px;height:1px;background:#0e0e0e"></div>
<div class="a" style="left:873px;top:783px;width:818px;height:16px;background:#3a3a3a"></div>
<div class="a" style="left:880px;top:783px;width:804px;height:16px;background:#a6a4c4"></div>
<div class="a" style="left:873px;top:799px;width:8px;height:222px;background:#2a2a2a"></div>
<div class="a" style="left:881px;top:799px;width:803px;height:222px;background:#303030"></div>
<div class="a" style="left:873px;top:1022px;width:834px;height:16px;background:#232323"></div>
<div class="a" style="left:2px;top:1021px;width:977px;height:1px;background:#0e0e0e"></div>
<svg style="left:860px;top:730px;z-index:2" width="860" height="300">
 <!-- work area caps -->
 <path d="M20 4 H14 Q13 4 13 7 V9 Q13 12 16 12 H20 Z" fill="#2f8cf0"/>
 <path d="M824 4 H828 Q831 4 831 8 Q831 12 828 12 H824 Z" fill="#2f8cf0"/>
 <path d="M20 33 H16 Q13 33 13 37 V44 Q13 48 16 48 H20 Z" fill="#2f8cf0"/>
 <path d="M824 33 H828 Q830 33 830 37 V44 Q830 48 828 48 H824 Z" fill="#2f8cf0"/>
 <!-- ticks -->
 <g stroke="#bdbdbd" stroke-width="1">
  <line x1="73.8" y1="27" x2="73.8" y2="32"/><line x1="127.5" y1="27" x2="127.5" y2="32"/><line x1="181" y1="27" x2="181" y2="32"/>
  <line x1="235" y1="27" x2="235" y2="32"/><line x1="288" y1="27" x2="288" y2="32"/><line x1="342" y1="27" x2="342" y2="32"/>
  <line x1="395.3" y1="27" x2="395.3" y2="32"/><line x1="449" y1="27" x2="449" y2="32"/><line x1="502.6" y1="27" x2="502.6" y2="32"/>
  <line x1="556.2" y1="27" x2="556.2" y2="32"/><line x1="609.9" y1="27" x2="609.9" y2="32"/><line x1="663.5" y1="27" x2="663.5" y2="32"/>
  <line x1="717.5" y1="27" x2="717.5" y2="32"/><line x1="771" y1="27" x2="771" y2="32"/><line x1="824" y1="27" x2="824" y2="32"/>
 </g>
 <!-- playhead line -->
 <line x1="20.6" y1="28" x2="20.6" y2="290" stroke="#0a1a40" stroke-width="2.6"/>
 <line x1="20.6" y1="28" x2="20.6" y2="290" stroke="#8ab0e0" stroke-width="1"/>
 <path d="M14.6 18 Q14.6 16.5 16.5 16.5 H18.5 Q20.6 14.8 22.7 16.5 H24.7 Q26.6 16.5 26.6 18 V25 L20.6 31.5 L14.6 25 Z" fill="#2f8cf0" stroke="#0a1a40" stroke-width="0.8"/>
 <circle cx="19.3" cy="24" r="0.6" fill="#0a1a40"/><circle cx="21.9" cy="24" r="0.6" fill="#0a1a40"/>
 <!-- marker -->
 <path d="M835 35 H846 V45 L840.5 49 L835 45 Z" fill="#c8c8c8"/>
 <!-- comment icon -->
 <path d="M839 56 L834 62 L838 66 L843 60 Z" fill="none" stroke="#c8c8c8" stroke-width="1.1"/>
 <rect x="841" y="57" width="5" height="6" fill="#c8c8c8"/><circle cx="839" cy="65" r="2" fill="none" stroke="#c8c8c8"/>
</svg>
<div class="t" style="left:879px;top:746px;font-size:10px;color:#c0c0c0">00s</div>
<div class="t" style="left:925px;top:746px;font-size:10px;color:#c0c0c0">02s</div>
<div class="t" style="left:979px;top:746px;font-size:10px;color:#c0c0c0">04s</div>
<div class="t" style="left:1032px;top:746px;font-size:10px;color:#c0c0c0">06s</div>
<div class="t" style="left:1086px;top:746px;font-size:10px;color:#c0c0c0">08s</div>
<div class="t" style="left:1140px;top:746px;font-size:10px;color:#c0c0c0">10s</div>
<div class="t" style="left:1193px;top:746px;font-size:10px;color:#c0c0c0">12s</div>
<div class="t" style="left:1247px;top:746px;font-size:10px;color:#c0c0c0">14s</div>
<div class="t" style="left:1300px;top:746px;font-size:10px;color:#c0c0c0">16s</div>
<div class="t" style="left:1354px;top:746px;font-size:10px;color:#c0c0c0">18s</div>
<div class="t" style="left:1407px;top:746px;font-size:10px;color:#c0c0c0">20s</div>
<div class="t" style="left:1461px;top:746px;font-size:10px;color:#c0c0c0">22s</div>
<div class="t" style="left:1514px;top:746px;font-size:10px;color:#c0c0c0">24s</div>
<div class="t" style="left:1568px;top:746px;font-size:10px;color:#c0c0c0">26s</div>
<div class="t" style="left:1622px;top:746px;font-size:10px;color:#c0c0c0">28s</div>
<div class="t" style="left:1675px;top:746px;font-size:10px;color:#c0c0c0">30s</div>
<!-- bottom status -->
<svg style="left:0;top:1021px" width="1000" height="17">
 <rect x="6" y="2" width="16" height="14" fill="#1d2a38"/>
 <rect x="26" y="2" width="16" height="14" fill="#1d2a38"/>
 <g fill="none" stroke="#4a90d8" stroke-width="1.1">
  <rect x="9.5" y="4.5" width="7" height="6"/><rect x="12.5" y="7.5" width="7" height="6"/><circle cx="16" cy="10.5" r="1.2"/>
  <circle cx="32" cy="7" r="3.5"/><rect x="32.5" y="8.5" width="7" height="6"/>
 </g>
 <g fill="#b0b0b0">
  <path d="M48 3 H57 V6 L59 8.5 L57 11 V14 H48 V11 L46 8.5 L48 6 Z"/>
  <circle cx="70" cy="7" r="4"/><path d="M65 14 Q70 8 75 14 Z"/><path d="M75 5 L79 5 L77 9 Z"/>
 </g>
 <path d="M876 10 L882 6 L888 10 Z" fill="#b8b8b8"/>
 <circle cx="904" cy="9" r="4" fill="none" stroke="#b8b8b8" stroke-width="1.5"/>
 <line x1="909" y1="9" x2="945" y2="9" stroke="#555" stroke-width="1"/>
 <path d="M958 11 L964 5 L967 8 L970 5 L976 11 Z" fill="#b8b8b8"/>
</svg>
<div class="t" style="left:88px;top:1024px;font-size:11px;color:#a8a8a8">Frame Render Time:</div>
<div class="t" style="left:194px;top:1024px;font-size:11px;color:#3ac8a0;font-weight:bold">0ms</div>
<!-- ============ PARAGRAPH ============ -->
<div class="pn" style="left:1712px;top:700px;width:208px;height:338px"></div>
<div class="t tab act" style="left:1726px;top:708px;color:#c8c8c8">Paragraph</div>
<div class="hb" style="left:1789px;top:711px"></div>
<div class="a" style="left:1720px;top:733px;width:20px;height:20px;background:#131820"></div>
<svg style="left:1712px;top:730px" width="208" height="80">
 <g fill="#3d8fe0"><rect x="12" y="6" width="15" height="1.1"/><rect x="12" y="9" width="11" height="1.1"/><rect x="12" y="12" width="15" height="1.1"/><rect x="12" y="15" width="11" height="1.1"/><rect x="12" y="18" width="15" height="1.1"/></g>
 <g fill="#c8c8c8"><rect x="35" y="6" width="15" height="1.1"/><rect x="37" y="9" width="11" height="1.1"/><rect x="35" y="12" width="15" height="1.1"/><rect x="37" y="15" width="11" height="1.1"/><rect x="35" y="18" width="15" height="1.1"/></g>
 <g fill="#c8c8c8"><rect x="60" y="6" width="15" height="1.1"/><rect x="64" y="9" width="11" height="1.1"/><rect x="60" y="12" width="15" height="1.1"/><rect x="64" y="15" width="11" height="1.1"/><rect x="60" y="18" width="15" height="1.1"/></g>
 <g fill="#c8c8c8"><rect x="91" y="6" width="15" height="1.1"/><rect x="91" y="9" width="15" height="1.1"/><rect x="91" y="12" width="15" height="1.1"/><rect x="91" y="15" width="15" height="1.1"/><rect x="91" y="18" width="11" height="1.1"/></g>
 <g fill="#c8c8c8"><rect x="116" y="6" width="15" height="1.1"/><rect x="116" y="9" width="15" height="1.1"/><rect x="116" y="12" width="15" height="1.1"/><rect x="116" y="15" width="15" height="1.1"/><rect x="118" y="18" width="11" height="1.1"/></g>
 <g fill="#c8c8c8"><rect x="141" y="6" width="15" height="1.1"/><rect x="141" y="9" width="15" height="1.1"/><rect x="141" y="12" width="15" height="1.1"/><rect x="141" y="15" width="15" height="1.1"/><rect x="145" y="18" width="11" height="1.1"/></g>
 <g fill="#c8c8c8"><rect x="171" y="6" width="15" height="1.1"/><rect x="171" y="9" width="15" height="1.1"/><rect x="171" y="12" width="15" height="1.1"/><rect x="171" y="15" width="15" height="1.1"/><rect x="171" y="18" width="15" height="1.1"/></g>
 <rect x="7" y="29" width="182" height="1" fill="#303030"/>
 <!-- indent icons -->
 <g fill="#c0c0c0">
  <rect x="14" y="33" width="1" height="15"/><rect x="17" y="34" width="7" height="1"/><rect x="17" y="37" width="7" height="1"/><rect x="17" y="40" width="7" height="1"/><rect x="17" y="43" width="7" height="1"/><rect x="17" y="46" width="7" height="1"/>
  <path d="M8 40 H13 M11 38 L13 40 L11 42" stroke="#c0c0c0" fill="none"/>
  <rect x="8" y="51" width="7" height="1"/><rect x="8" y="54" width="7" height="1"/><rect x="8" y="57" width="7" height="1"/><rect x="8" y="60" width="7" height="1"/><rect x="16" y="50" width="1" height="15"/>
  <path d="M24 57 H19 M21 55 L19 57 L21 59" stroke="#c0c0c0" fill="none"/>
  <path d="M79 39 H85 M83 37 L85 39 L83 41" stroke="#c0c0c0" fill="none"/>
  <rect x="87.5" y="34.5" width="8" height="5" fill="none" stroke="#c0c0c0"/><rect x="87" y="42" width="9" height="1"/><rect x="87" y="45" width="9" height="1"/>
  <rect x="87" y="52" width="9" height="1"/><rect x="87" y="55" width="9" height="1"/><rect x="87.5" y="58.5" width="8" height="5" fill="none" stroke="#c0c0c0"/>
  <path d="M79 61 H85 M83 59 L85 61 L83 63" stroke="#c0c0c0" fill="none"/>
  <path d="M146 33 H152 M150 31 L152 33 L150 35" stroke="#c0c0c0" fill="none"/>
  <rect x="154" y="34" width="8" height="1"/><rect x="150" y="37" width="12" height="1"/><rect x="150" y="40" width="12" height="1"/><rect x="150" y="43" width="12" height="1"/>
 </g>
 <rect x="145" y="53" width="19" height="19" fill="#141a22"/>
 <path d="M146 56 L152 61.5 L146 67 Z" fill="#3d8fe0"/>
 <text x="152" y="69" font-size="17" font-weight="bold" fill="#3d8fe0" font-family="Liberation Sans">¶</text>
 <text x="169" y="69" font-size="17" font-weight="bold" fill="#c0c0c0" font-family="Liberation Sans">¶</text>
 <path d="M186.5 56 L180.5 61.5 L186.5 67 Z" fill="#c0c0c0"/>
</svg>
<div class="t bl" style="left:1741px;top:763px;font-size:11px">0</div><div class="t" style="left:1752px;top:764px;font-size:11px;color:#8a8a8a">px</div>
<div class="t bl" style="left:1741px;top:780px;font-size:11px">0</div><div class="t" style="left:1752px;top:781px;font-size:11px;color:#8a8a8a">px</div>
<div class="t bl" style="left:1814px;top:763px;font-size:11px">0</div><div class="t" style="left:1824px;top:764px;font-size:11px;color:#8a8a8a">px</div>
<div class="t bl" style="left:1814px;top:781px;font-size:11px">-1</div><div class="t" style="left:1827px;top:782px;font-size:11px;color:#8a8a8a">px</div>
<div class="t bl" style="left:1879px;top:763px;font-size:11px">0</div><div class="t" style="left:1889px;top:764px;font-size:11px;color:#8a8a8a">px</div>
</body></html>
